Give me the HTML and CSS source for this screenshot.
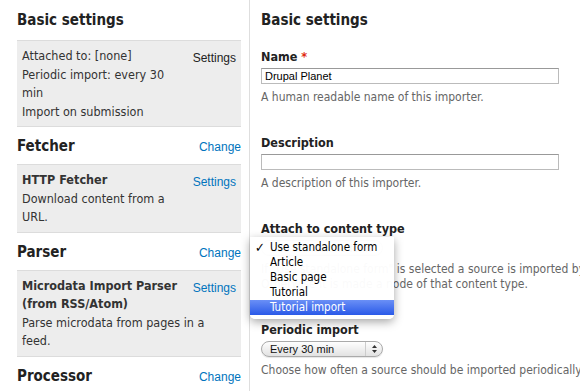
FILE: index.html
```html
<!DOCTYPE html>
<html lang="en">
<head>
    <meta charset="UTF-8">
    <title>Feeds importer - Drupal Planet</title>
    <link rel="stylesheet" href="styles.css">
</head>
<body>
<div class="page">
    <div class="sidebar">
        <div class="section first">
            <div class="section-head"><h2>Basic settings</h2></div>
            <div class="plugin">
                <span class="plugin-link plain">Settings</span>
                <div>Attached to: [none]</div>
                <div>Periodic import: every 30 min</div>
                <div>Import on submission</div>
            </div>
        </div>
        <div class="section">
            <div class="section-head"><h2>Fetcher</h2><a class="change" href="#">Change</a></div>
            <div class="plugin">
                <a class="plugin-link" href="#">Settings</a>
                <div class="plugin-name">HTTP Fetcher</div>
                <div>Download content from a URL.</div>
            </div>
        </div>
        <div class="section">
            <div class="section-head"><h2>Parser</h2><a class="change" href="#">Change</a></div>
            <div class="plugin">
                <a class="plugin-link" href="#">Settings</a>
                <div class="plugin-name">Microdata Import Parser (from RSS/Atom)</div>
                <div>Parse microdata from pages in a feed.</div>
            </div>
        </div>
        <div class="section">
            <div class="section-head"><h2>Processor</h2><a class="change" href="#">Change</a></div>
        </div>
    </div>

    <div class="main">
        <h2 class="main-title">Basic settings</h2>

        <div class="form-item">
            <label for="name">Name <span class="form-required">*</span></label>
            <input class="form-text" type="text" id="name" value="Drupal Planet">
            <div class="description">A human readable name of this importer.</div>
        </div>

        <div class="form-item">
            <label for="desc">Description</label>
            <input class="form-text" type="text" id="desc" value="">
            <div class="description">A description of this importer.</div>
        </div>

        <div class="form-item">
            <label for="content-type">Attach to content type</label>
            <div class="select-wrap">
                <select id="content-type" class="form-select">
                    <option>Use standalone form</option>
                </select>
            </div>
            <div class="description">If "Use standalone form" is selected a source is imported by using a form under /import.<br>Otherwise it is made a node of that content type.</div>

            <ul class="popup-menu">
                <li class="checked">Use standalone form</li>
                <li>Article</li>
                <li>Basic page</li>
                <li>Tutorial</li>
                <li class="hover">Tutorial import</li>
            </ul>
        </div>

        <div class="form-item">
            <label for="period">Periodic import</label>
            <div class="select-wrap">
                <select id="period" class="form-select">
                    <option>Every 30 min</option>
                </select>
                <svg class="select-arrows" width="5" height="8" viewBox="0 0 5 8">
                    <path d="M0 3 L2.5 0 L5 3 Z M0 5 L2.5 8 L5 5 Z" fill="#333"/>
                </svg>
            </div>
            <div class="description">Choose how often a source should be imported periodically. Requires cron to be configured.</div>
        </div>
    </div>
</div>
</body>
</html>
```

FILE: styles.css
```css
body { margin: 0; font-family: "DejaVu Sans Condensed", "DejaVu Sans", sans-serif; font-stretch: condensed; color: #333; background: #fff; overflow: hidden; }
.page { display: flex; height: 391px; }

.sidebar { width: 224px; flex: none; padding: 0 8px 0 17px; border-right: 1px solid #dedede; }
.section-head { display: flex; justify-content: space-between; align-items: baseline; padding: 9px 0 8px; }
.first .section-head { padding: 10px 0 10px; }
h2 { margin: 0; font-size: 15px; line-height: 20px; font-weight: bold; color: #222; }
.change { font: 12px "Liberation Sans", Arial, sans-serif; color: #0074bd; text-decoration: none; }

.plugin { background: #ededed; border-top: 1px solid #dcdcdc; border-bottom: 1px solid #dcdcdc; padding: 6px 5px 5px; font-size: 12.5px; line-height: 18.5px; }
.plugin-name { font-weight: bold; }
.plugin-link { float: right; margin: 2px 0 14px 8px; font: 12px/18.5px "Liberation Sans", Arial, sans-serif; color: #0074bd; text-decoration: none; }
.plugin-link.plain { color: #222; }

.main { flex: 1; padding-left: 11px; }
.main-title { padding-top: 10px; margin-bottom: 19px; }
.form-item { position: relative; margin-bottom: 30px; }
label { display: block; font-weight: bold; font-size: 12.5px; line-height: 16px; margin-bottom: 3px; color: #222; }
.form-required { color: #e0280f; }
.form-text { display: block; width: 298px; height: 16px; box-sizing: border-box; margin: 0; padding: 0 3px; border: 1px solid #bbb; border-top-color: #999; font: 11px "Liberation Sans", Arial, sans-serif; color: #000; }
.description { margin-top: 6px; font-size: 12px; line-height: 15px; color: #666; white-space: nowrap; }

.select-wrap { position: relative; width: 122px; }
.form-select { display: block; width: 122px; height: 16px; box-sizing: border-box; margin: 0; padding: 0 0 0 8px; -webkit-appearance: none; appearance: none; border: 1px solid #aaa; border-radius: 8px; background: linear-gradient(#fefefe, #e2e2e2); box-shadow: 0 1px 1px rgba(0, 0, 0, 0.1); font: 11px "Liberation Sans", Arial, sans-serif; color: #111; }
.select-arrows { position: absolute; right: 0; top: 1px; width: 5px; height: 8px; padding: 3px 6px 3px 6px; border-left: 1px solid #ccc; }

.popup-menu { position: absolute; left: -11px; top: 16px; width: 144px; margin: 0; padding: 3px 0 4px; list-style: none; background: rgba(255, 255, 255, 0.97); border-radius: 0 0 5px 5px; box-shadow: 0 3px 10px rgba(0, 0, 0, 0.35); font-size: 11.5px; color: #000; }
.popup-menu li { position: relative; padding-left: 20px; line-height: 15px; }
.popup-menu .checked::before { content: "✓"; position: absolute; left: 5px; font-size: 13px; font-weight: bold; }
.popup-menu .hover { background: linear-gradient(#6a8ff6, #2a5ae8); color: #fff; }
```
